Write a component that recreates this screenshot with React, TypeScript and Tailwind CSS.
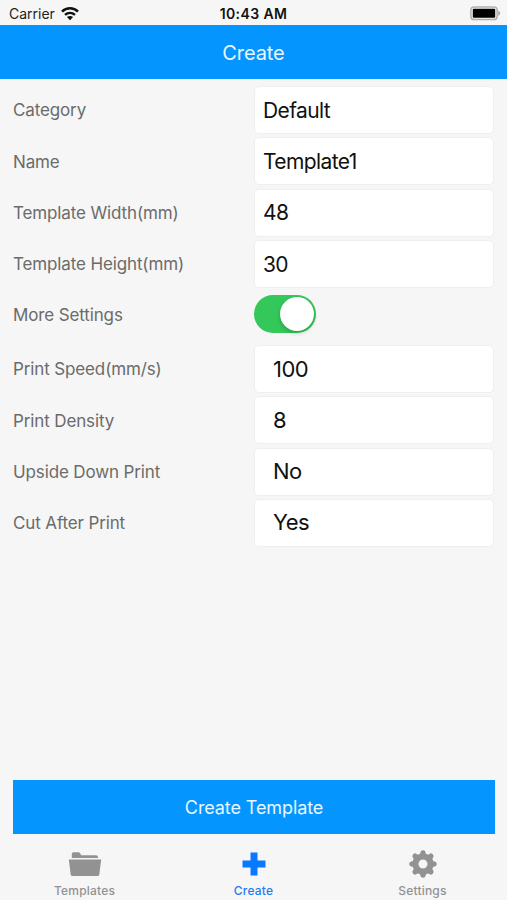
import React, { useState } from 'react';

const tabs = ['Templates', 'Create', 'Settings'];

const WifiIcon = () => (
    <svg className="w-[18px] h-[14px]" viewBox="0 0 18 14" fill="none" stroke="#111">
        <path strokeWidth="2.5" d="M1 4.6C5.5 0.2 12.5 0.2 17 4.6" />
        <path strokeWidth="2.4" d="M4 7.9C6.9 5.3 11.1 5.3 14 7.9" />
        <path fill="#111" stroke="none" d="M5.9 10.1C7.7 8.6 10.3 8.6 12.1 10.1L9 13.2Z" />
    </svg>
);

const BatteryIcon = () => (
    <svg className="w-[31px] h-[15px]" viewBox="0 0 31 15">
        <rect x="0.9" y="0.9" width="26.2" height="12.7" rx="3.2" fill="#f6f6f6" stroke="#b0b0b0" strokeWidth="1.5" />
        <rect x="2.8" y="2.8" width="22.4" height="8.9" rx="1" fill="#000" />
        <path d="M28.2 4.7C30.8 5.8 30.8 8.7 28.2 9.8Z" fill="#a8a8a8" />
    </svg>
);

const FolderIcon = () => (
    <svg className="w-[34px] h-[26px]" viewBox="0 0 34 26" fill="#929292">
        <path d="M3.8 7V3.2Q3.8 1.2 5.5 1.2H10.5Q11.6 1.2 12.3 2.6L13.2 4.2H28.2Q30 4.2 30 6V7Z" />
        <path d="M0.8 8.4H33.2L31.3 23.4Q31.1 25 29.5 25H4.5Q2.9 25 2.7 23.4Z" />
    </svg>
);

const PlusIcon = () => (
    <svg className="w-[24px] h-[24px]" viewBox="0 0 24 24" fill="#087aff">
        <path d="M8.5 0.5H15.5V8.5H23.5V15.5H15.5V23.5H8.5V15.5H0.5V8.5H8.5Z" />
    </svg>
);

const GearIcon = () => (
    <svg className="w-[28px] h-[28px]" viewBox="0 0 28 28" fill="none" stroke="#929292">
        <circle cx="14" cy="14" r="7.5" strokeWidth="6" />
        {[0, 45, 90, 135, 180, 225, 270, 315].map((angle) => (
            <path
                key={angle}
                transform={`rotate(${angle} 14 14)`}
                fill="#929292"
                stroke="none"
                d="M10 5Q11.3 4 11.4 2.4Q11.6 0.2 14 0.2Q16.4 0.2 16.6 2.4Q16.7 4 18 5Z"
            />
        ))}
    </svg>
);

const TabIcon = ({ name }: { name: string }) => {
    if (name === 'Templates') return <FolderIcon />;
    if (name === 'Create') return <PlusIcon />;
    return <GearIcon />;
};

type FieldProps = {
    label: string;
    value: string;
    inset?: boolean;
};

const Field = ({ label, value, inset }: FieldProps) => (
    <div className="flex items-center h-[51.25px] px-[13px]">
        <span className="flex-1 pt-[2px] text-[17px] tracking-[-0.13px] text-[#6b6b6b]">{label}</span>
        <div
            className={`flex items-center w-[240px] h-[48px] bg-white border border-[#efefef] rounded-[5px] text-[#111] ${inset ? 'pl-[18px] text-[22px] tracking-[-0.5px]' : 'pl-[8px] pt-px text-[21px] tracking-[-0.6px]'}`}
        >
            {value}
        </div>
    </div>
);

const App = () => {
    const [moreSettings, setMoreSettings] = useState(true);
    const [activeTab, setActiveTab] = useState('Create');

    return (
        <div className="flex flex-col w-full h-[900px] overflow-hidden bg-[#f6f6f6] font-['Inter','Liberation_Sans',sans-serif]">
            {/* Status bar */}
            <div className="grid grid-cols-3 items-center h-[25px] shrink-0 pt-[2px] text-[14px] text-[#222]">
                <div className="flex items-center gap-[6px] pl-[9px]">
                    <span>Carrier</span>
                    <WifiIcon />
                </div>
                <span className="text-center font-semibold tracking-[0.4px] text-[#111]">10:43 AM</span>
                <div className="flex justify-end pr-[6px]">
                    <BatteryIcon />
                </div>
            </div>

            <header className="flex items-center justify-center h-[54px] shrink-0 pt-[2px] bg-[#0595ff] text-[20px] tracking-[-0.1px] text-[#e8f6ff]">
                Create
            </header>

            <main className="flex-1 pt-[5.5px]">
                <Field label="Category" value="Default" />
                <Field label="Name" value="Template1" />
                <Field label="Template Width(mm)" value="48" />
                <Field label="Template Height(mm)" value="30" />

                <div className="flex items-start h-[54px] pt-[5.5px] px-[13px]">
                    <span className="flex-1 pt-px leading-[38px] text-[17px] tracking-[-0.13px] text-[#6b6b6b]">More Settings</span>
                    <div className="w-[240px]">
                        <button
                            onClick={() => setMoreSettings(!moreSettings)}
                            className={`flex items-center w-[62px] h-[38px] rounded-full px-[2px] ${moreSettings ? 'justify-end bg-[#34c759]' : 'justify-start bg-[#e5e5e5]'}`}
                        >
                            <span className="w-[34px] h-[34px] rounded-full bg-white shadow-[0_2px_4px_rgba(0,0,0,0.2)]" />
                        </button>
                    </div>
                </div>

                {moreSettings && (
                    <>
                        <Field label="Print Speed(mm/s)" value="100" inset />
                        <Field label="Print Density" value="8" inset />
                        <Field label="Upside Down Print" value="No" inset />
                        <Field label="Cut After Print" value="Yes" inset />
                    </>
                )}
            </main>

            <div className="shrink-0 pl-[13px] pr-[12px] pb-[13px]">
                <button className="w-full h-[54px] bg-[#0595ff] text-[18px] tracking-[-0.1px] text-[#e8f6ff]">Create Template</button>
            </div>

            {/* Tab bar */}
            <nav className="grid grid-cols-3 h-[53px] shrink-0 bg-[#f6f6f7]">
                {tabs.map((tab) => (
                    <button
                        key={tab}
                        onClick={() => setActiveTab(tab)}
                        className={`flex flex-col items-center text-[12px] leading-[16px] font-medium tracking-[0.2px] ${activeTab === tab ? 'text-[#1a80f0]' : 'text-[#929292]'}`}
                    >
                        <span className="flex items-center justify-center h-[33px] mb-[3px]">
                            <TabIcon name={tab} />
                        </span>
                        {tab}
                    </button>
                ))}
            </nav>
        </div>
    );
};

export default App;
